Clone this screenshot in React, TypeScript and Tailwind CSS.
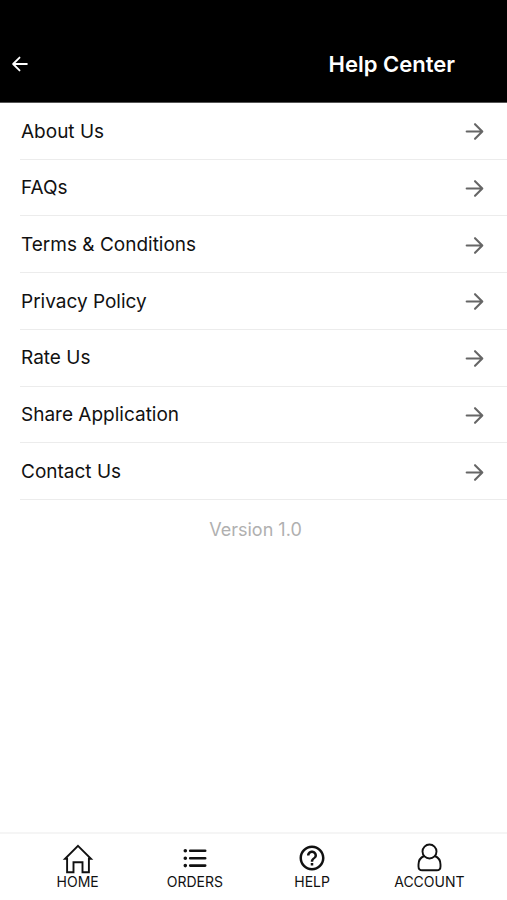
import type { ReactNode } from "react";
import { MdHelpOutline } from "react-icons/md";

const LINKS = [
  { label: "About Us", href: "#about" },
  { label: "FAQs", href: "#faqs" },
  { label: "Terms & Conditions", href: "#terms" },
  { label: "Privacy Policy", href: "#privacy" },
  { label: "Rate Us", href: "#rate" },
  { label: "Share Application", href: "#share" },
  { label: "Contact Us", href: "#contact" },
];

function ArrowIcon({ className }: { className: string }) {
  return (
    <svg viewBox="0 0 24 24" className={className} fill="none" stroke="currentColor" strokeWidth="2" strokeLinecap="round" strokeLinejoin="round" aria-hidden="true">
      <path d="M4.500 12 H19.200 M12.500 5 L19.500 12 L12.500 19" />
    </svg>
  );
}

function HomeIcon() {
  return (
    <svg viewBox="0 0 32 32" className="size-8" fill="none" stroke="currentColor" strokeWidth="1.9" strokeLinejoin="miter" aria-hidden="true">
      <path d="M16 3.800 L29 16.800 H26.900 V30.200 H20.500 V20.200 H11.500 V30.200 H5.100 V16.800 H3 Z" />
    </svg>
  );
}

function ListIcon() {
  return (
    <svg viewBox="0 0 32 32" className="size-8" fill="none" stroke="currentColor" strokeWidth="2.6" strokeLinecap="round" aria-hidden="true">
      <path d="M11.200 8.800 H26.200 M11.200 16.200 H26.200 M11.200 23.600 H26.200" />
      <path strokeWidth="3.6" d="M6.300 8.800 H6.310 M6.300 16.200 H6.310 M6.300 23.600 H6.310" />
    </svg>
  );
}

function AccountIcon() {
  return (
    <svg viewBox="0 0 32 32" className="size-8" fill="none" stroke="currentColor" strokeWidth="1.9" strokeLinejoin="round" aria-hidden="true">
      <circle cx="16.500" cy="9.500" r="7" />
      <path d="M11.200 14 C7.500 15.500 5.500 18.500 5.500 22.500 V24.500 C5.500 27 6.800 28.300 9.300 28.300 H23.700 C26.200 28.300 27.500 27 27.500 24.500 V22.500 C27.500 18.500 25.500 15.500 21.800 14" />
    </svg>
  );
}

const TABS: { label: string; href: string; icon: ReactNode }[] = [
  { label: "HOME", href: "#home", icon: <HomeIcon /> },
  { label: "ORDERS", href: "#orders", icon: <ListIcon /> },
  { label: "HELP", href: "#help", icon: <MdHelpOutline className="size-[30px]" /> },
  { label: "ACCOUNT", href: "#account", icon: <AccountIcon /> },
];

export default function App() {
  return (
    <div className="flex min-h-screen flex-col bg-white font-['Inter',sans-serif] text-black">
      {/* Header */}
      <header className="flex items-center justify-between border-b border-[#555] bg-black pt-[42px] pr-[52px] pb-4 pl-[9px] text-white">
        <button type="button" aria-label="Back" className="flex h-11 items-center">
          <ArrowIcon className="size-[22px] rotate-180" />
        </button>
        <h1 className="text-[22px] leading-7 font-semibold">Help Center</h1>
      </header>

      {/* Links */}
      <main className="flex-1">
        <ul className="grid min-h-[397px] auto-rows-fr pl-5">
          {LINKS.map((l) => (
            <li key={l.label} className="flex border-b border-[#ececec]">
              <a href={l.href} className="flex flex-1 items-center justify-between pt-[2px] pr-5 pl-px text-[19px] text-[#111]">
                {l.label}
                <ArrowIcon className="size-[25px] text-[#666]" />
              </a>
            </li>
          ))}
        </ul>
        <p className="mt-4 pl-1 text-center text-[18px] leading-7 text-[#b0b0b0]">Version 1.0</p>
      </main>

      {/* Tab bar */}
      <nav className="flex border-t-2 border-[#f5f5f5] px-[19px] pt-2 pb-[10px]">
        {TABS.map((t) => (
          <a key={t.label} href={t.href} className="flex flex-1 flex-col items-center text-[14px] leading-4 text-[#111]">
            <span className="flex h-8 items-center">{t.icon}</span>
            {t.label}
          </a>
        ))}
      </nav>
    </div>
  );
}
